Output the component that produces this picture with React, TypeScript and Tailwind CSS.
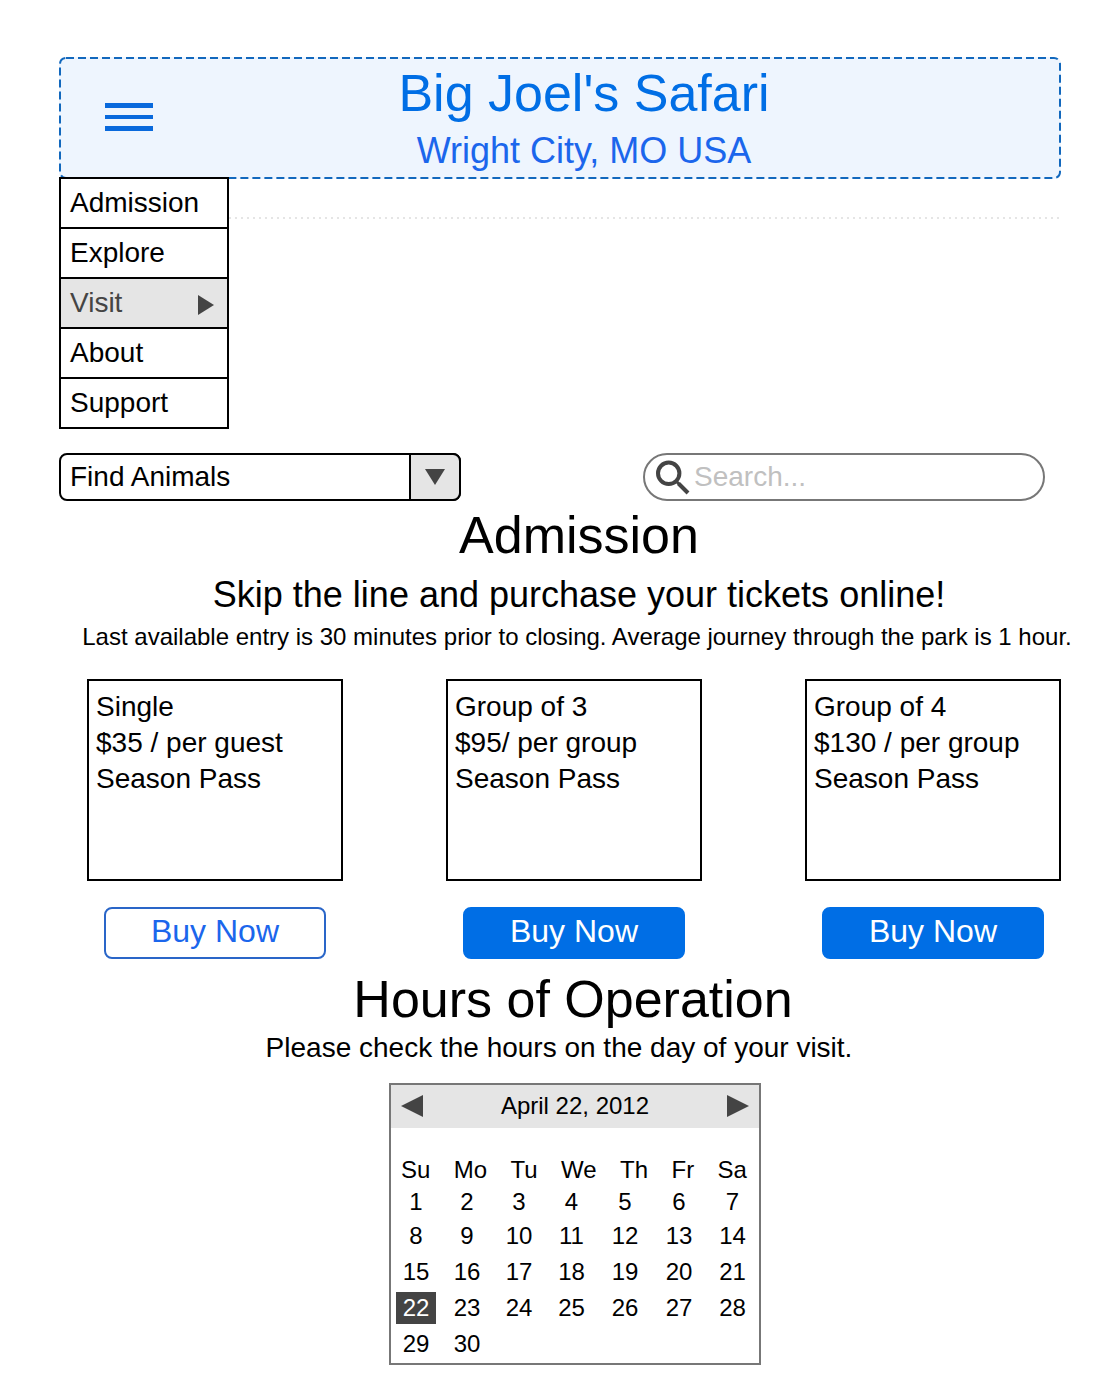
import React from "react";

const menuItems = ["Admission", "Explore", "Visit", "About", "Support"];

const tickets = [
  { name: "Single", price: "$35 / per guest", outlined: true },
  { name: "Group of 3", price: "$95/ per group", outlined: false },
  { name: "Group of 4", price: "$130 / per group", outlined: false },
];

const weekdays = ["Su", "Mo", "Tu", "We", "Th", "Fr", "Sa"];
const weeks = [0, 1, 2, 3, 4].map((w) =>
  weekdays.map((_, d) => w * 7 + d + 1).filter((day) => day <= 30),
);

function Header() {
  return (
    <header className="relative flex items-center rounded-md border-2 border-transparent bg-[#eef5fe] bg-origin-border px-11">
      <svg
        className="pointer-events-none absolute -inset-0.5 h-[calc(100%+4px)] w-[calc(100%+4px)] overflow-visible p-px"
        aria-hidden="true"
      >
        <rect
          width="100%"
          height="100%"
          rx="6"
          fill="none"
          stroke="#1268bd"
          strokeWidth="2"
          strokeDasharray="8 4"
        />
      </svg>
      <button type="button" aria-label="Menu" className="flex w-12 flex-col gap-[7px] pb-0.5">
        <span className="h-[5px] w-full bg-[#0969dc]" />
        <span className="h-[4px] w-full bg-[#0969dc]" />
        <span className="h-[5px] w-full bg-[#0969dc]" />
      </button>
      <div className="flex-1 pt-1 text-center">
        <h1 className="text-[52px] leading-[60px] text-[#006ee5]">Big Joel's Safari</h1>
        <p className="pt-0.5 text-[36px] leading-[52px] text-[#1b66ec]">Wright City, MO USA</p>
      </div>
    </header>
  );
}

function Menu() {
  return (
    <nav className="relative -mt-0.5 w-[170px] border-2 border-black bg-white">
      <ul className="divide-y-2 divide-black">
        {menuItems.map((item) => {
          const active = item === "Visit";
          return (
            <li key={item}>
              <a
                href="#"
                className={
                  active
                    ? "flex items-center justify-between bg-[#e5e5e5] pr-[13px] pl-[9px] leading-[48px] text-[#444]"
                    : "block pl-[9px] leading-[48px]"
                }
              >
                {item}
                {active && (
                  <svg width="16" height="20" viewBox="0 0 16 20" className="mt-1" aria-hidden="true">
                    <path d="M0 0L16 10L0 20Z" fill="#444" />
                  </svg>
                )}
              </a>
            </li>
          );
        })}
      </ul>
    </nav>
  );
}

function Filters() {
  return (
    <div className="mt-6 flex items-center justify-between pr-4">
      <div className="relative w-[402px]">
        <select
          aria-label="Find Animals"
          className="block h-12 w-full appearance-none rounded-lg border-2 border-black bg-white pr-14 pl-[9px]"
        >
          <option>Find Animals</option>
        </select>
        <span className="pointer-events-none absolute inset-y-0 right-0 flex w-[52px] items-center justify-center rounded-r-lg border-2 border-black bg-[#e5e5e5]">
          <svg width="20" height="16" viewBox="0 0 20 16" aria-hidden="true">
            <path d="M0 0H20L10 16Z" fill="#444" />
          </svg>
        </span>
      </div>
      <label className="flex h-12 w-[402px] items-center rounded-full border-2 border-[#777] pr-5 pl-[10px]">
        <svg width="36" height="36" viewBox="0 0 36 36" fill="none" stroke="#444" strokeWidth="4" aria-hidden="true">
          <circle cx="13.7" cy="14.3" r="10.7" />
          <path d="M21.5 22.5L24.5 25.5" strokeWidth="3" />
          <path d="M23.5 24.5L33 34" />
        </svg>
        <input
          type="search"
          aria-label="Search"
          placeholder="Search..."
          className="ml-[3px] h-full min-w-0 flex-1 outline-none placeholder:text-[#c0c0c0]"
        />
      </label>
    </div>
  );
}

function Tickets() {
  return (
    <div className="mt-[30px] flex justify-between pr-[53px] pl-[87px]">
      {tickets.map((ticket) => (
        <article key={ticket.name} className="flex w-64 flex-col items-center gap-[26px]">
          <div className="min-h-[202px] w-full border-2 border-black px-[7px] py-2 leading-9">
            <h3>{ticket.name}</h3>
            <p>{ticket.price}</p>
            <p>Season Pass</p>
          </div>
          <button
            type="button"
            className={
              ticket.outlined
                ? "h-[52px] w-[222px] rounded-lg border-2 border-[#2a66c8] pb-1 text-[32px] leading-none text-[#1b66ec]"
                : "h-[52px] w-[222px] rounded-lg border-2 border-[#006ee5] bg-[#006ee5] pb-1 text-[32px] leading-none text-white"
            }
          >
            Buy Now
          </button>
        </article>
      ))}
    </div>
  );
}

function Calendar() {
  return (
    <div className="mx-auto mt-4 w-[372px] border-2 border-[#777] pb-px text-[24px]">
      <div className="flex items-center justify-between bg-[#e5e5e5] px-[10px] pb-0.5 leading-[41px]">
        <button type="button" aria-label="Previous month">
          <svg width="22" height="22" viewBox="0 0 22 22" className="block" aria-hidden="true">
            <path d="M22 0V22L0 11Z" fill="#444" />
          </svg>
        </button>
        <span>April 22, 2012</span>
        <button type="button" aria-label="Next month">
          <svg width="22" height="22" viewBox="0 0 22 22" className="block" aria-hidden="true">
            <path d="M0 0V22L22 11Z" fill="#444" />
          </svg>
        </button>
      </div>
      <table className="mt-[26px] block leading-8">
        <thead className="block">
          <tr className="flex justify-between pr-3 pl-[10px]">
            {weekdays.map((day) => (
              <th key={day} scope="col" className="font-normal">
                {day}
              </th>
            ))}
          </tr>
        </thead>
        <tbody className="block">
          {weeks.map((week) => (
            <tr
              key={week[0]}
              className="grid h-9 grid-cols-[50fr_52fr_52fr_53fr_54fr_54fr_53fr] items-center justify-items-center first:h-8"
            >
              {week.map((day) => (
                <td key={day} className={day === 22 ? "w-10 bg-[#444] text-center text-white" : "w-10 text-center"}>
                  {day}
                </td>
              ))}
            </tr>
          ))}
        </tbody>
      </table>
    </div>
  );
}

export default function App() {
  return (
    <div className="min-h-screen bg-white pt-[57px] pb-6 font-['Liberation_Sans',Arial,sans-serif] text-[28px] text-black">
      <div className="pr-[53px] pl-[59px]">
        <Header />
        <div className="flex items-start">
          <Menu />
          <hr className="mt-[38px] h-0.5 flex-1 border-0 bg-[repeating-linear-gradient(90deg,#e5e5e5_0_2px,transparent_2px_6px)]" />
        </div>
        <Filters />
      </div>
      <main>
        <section>
          <div className="mt-1 pr-9 pl-20 text-center">
            <h2 className="text-[52px] leading-[60px]">Admission</h2>
            <p className="text-[36px] leading-[60px]">Skip the line and purchase your tickets online!</p>
            <p className="pr-1 text-[24px] leading-6">
              Last available entry is 30 minutes prior to closing. Average journey through the park is 1 hour.
            </p>
          </div>
          <Tickets />
        </section>
        <section className="mt-2.5 pr-[53px] pl-[89px] text-center">
          <h2 className="pr-1 text-[52px] leading-[60px]">Hours of Operation</h2>
          <p className="pr-8 leading-[38px]">Please check the hours on the day of your visit.</p>
          <Calendar />
        </section>
      </main>
    </div>
  );
}
